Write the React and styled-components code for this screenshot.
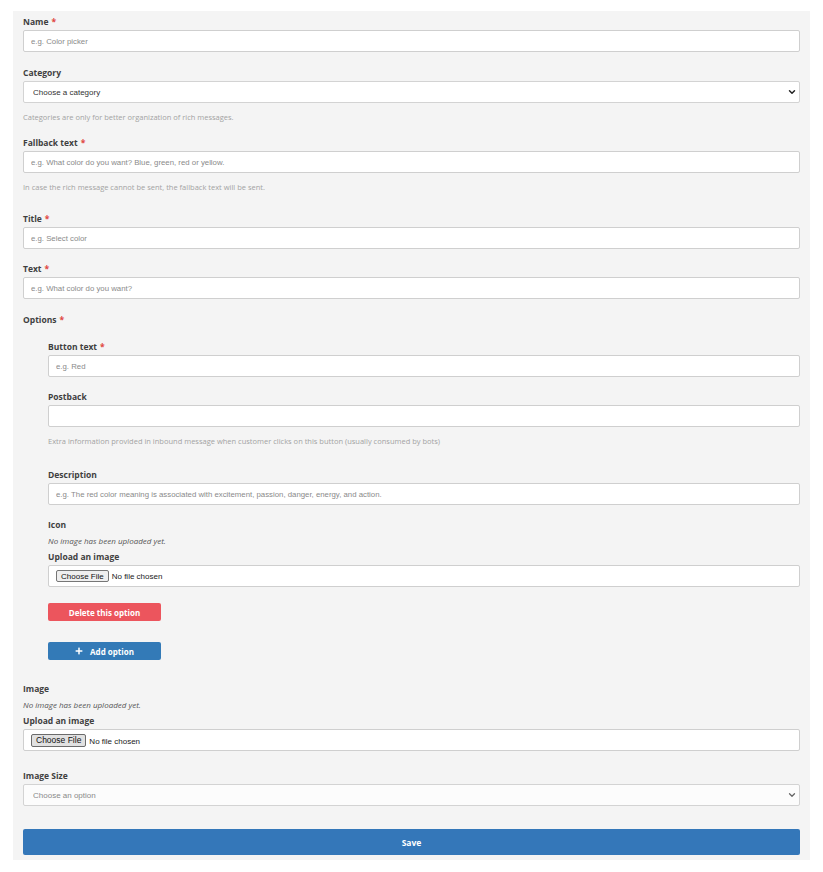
import React from 'react';
import styled, { createGlobalStyle } from 'styled-components';
import { ChevronDown } from 'lucide-react';
import { FaPlus } from 'react-icons/fa';

const GlobalStyle = createGlobalStyle`
  html, body {
    margin: 0;
    padding: 0;
    background: #fff;
  }
  * {
    box-sizing: border-box;
  }
`;

export default function App() {
  return (
    <Page>
      <GlobalStyle />
      <Panel>
        <FormGroup $mb={15}>
          <Label required>Name</Label>
          <TextInput placeholder="e.g. Color picker" />
        </FormGroup>

        <FormGroup $mb={14}>
          <Label>Category</Label>
          <SelectBox>
            <Select defaultValue="">
              <option value="">Choose a category</option>
            </Select>
            <Chevron size={10} strokeWidth={3.5} />
          </SelectBox>
          <HelpText>Categories are only for better organization of rich messages.</HelpText>
        </FormGroup>

        <FormGroup $mb={20}>
          <Label required>Fallback text</Label>
          <TextInput placeholder="e.g. What color do you want? Blue, green, red or yellow." />
          <HelpText>In case the rich message cannot be sent, the fallback text will be sent.</HelpText>
        </FormGroup>

        <FormGroup $mb={14}>
          <Label required>Title</Label>
          <TextInput placeholder="e.g. Select color" />
        </FormGroup>

        <FormGroup $mb={15}>
          <Label required>Text</Label>
          <TextInput placeholder="e.g. What color do you want?" />
        </FormGroup>

        <SectionTitle>
          Options<Star>*</Star>
        </SectionTitle>

        <OptionBlock>
          <FormGroup $mb={14}>
            <Label required>Button text</Label>
            <TextInput placeholder="e.g. Red" />
          </FormGroup>

          <FormGroup $mb={22}>
            <Label>Postback</Label>
            <TextInput />
            <HelpText>
              Extra information provided in inbound message when customer clicks on this button (usually consumed by bots)
            </HelpText>
          </FormGroup>

          <FormGroup $mb={14}>
            <Label>Description</Label>
            <TextInput placeholder="e.g. The red color meaning is associated with excitement, passion, danger, energy, and action." />
          </FormGroup>

          <FormGroup $mb={16}>
            <Label>Icon</Label>
            <EmptyNote>No image has been uploaded yet.</EmptyNote>
            <Label $spaced>Upload an image</Label>
            <FileBox>
              <FileInput type="file" />
            </FileBox>
          </FormGroup>

          <ActionButton $variant="danger" $mb={21}>Delete this option</ActionButton>

          <ActionButton $variant="primary" $mb={23}>
            <FaPlus size={8} />
            Add option
          </ActionButton>
        </OptionBlock>

        <FormGroup $mb={19}>
          <Label>Image</Label>
          <EmptyNote>No image has been uploaded yet.</EmptyNote>
          <Label $spaced>Upload an image</Label>
          <FileBox>
            <FileInput type="file" $classic />
          </FileBox>
        </FormGroup>

        <FormGroup $mb={23}>
          <Label>Image Size</Label>
          <SelectBox>
            <Select defaultValue="" $muted>
              <option value="">Choose an option</option>
            </Select>
            <Chevron size={10} strokeWidth={3} $muted />
          </SelectBox>
        </FormGroup>

        <SaveButton>Save</SaveButton>
      </Panel>
    </Page>
  );
}

function Label({ required, children, $spaced }) {
  return (
    <LabelText $spaced={$spaced}>
      {children}
      {required && <Star>*</Star>}
    </LabelText>
  );
}

const Page = styled.div`
  padding: 11px 13px 12px;
  font-family: 'Open Sans', 'Liberation Sans', sans-serif;
`;

const Panel = styled.form`
  background: #f4f4f4;
  padding: 5px 10px 5px;
`;

const FormGroup = styled.div`
  display: flex;
  flex-direction: column;
  margin-bottom: ${({ $mb }) => $mb}px;
`;

const LabelText = styled.label`
  display: block;
  font-size: 8.5px;
  font-weight: 700;
  line-height: 12px;
  color: #3f3f3f;
  margin-top: ${({ $spaced }) => ($spaced ? 4 : 0)}px;
  margin-bottom: 2px;
`;

const SectionTitle = styled(LabelText)`
  margin-bottom: 15px;
`;

const Star = styled.span`
  color: #e0463f;
  margin-left: 3px;
`;

const TextInput = styled.input`
  display: block;
  width: 100%;
  height: 22px;
  padding: 0 7px;
  border: 1px solid #cfcfcf;
  border-radius: 2px;
  background: #fff;
  font-family: 'Liberation Sans', Arial, sans-serif;
  font-size: 7.8px;
  color: #333;
  outline: none;

  &::placeholder {
    color: #8a8a8a;
  }
`;

const SelectBox = styled.div`
  position: relative;
`;

const Select = styled.select`
  display: block;
  width: 100%;
  height: 22px;
  padding: 0 9px;
  border: 1px solid #d3d3d3;
  border-radius: 2px;
  background: ${({ $muted }) => ($muted ? '#fcfcfc' : '#fff')};
  appearance: none;
  font-family: 'Liberation Sans', Arial, sans-serif;
  font-size: 8px;
  color: ${({ $muted }) => ($muted ? '#8a8a8a' : '#333')};
  outline: none;
`;

const Chevron = styled(ChevronDown)`
  position: absolute;
  right: 3px;
  top: 6px;
  color: ${({ $muted }) => ($muted ? '#666' : '#222')};
  pointer-events: none;
`;

const HelpText = styled.p`
  margin: 8px 0 0;
  font-size: 7.5px;
  line-height: 12px;
  color: #a3a3a3;
`;

const OptionBlock = styled.div`
  padding-left: 25px;
`;

const EmptyNote = styled.p`
  margin: 2px 0 0;
  font-size: 8px;
  line-height: 12px;
  font-style: italic;
  color: #555;
`;

const FileBox = styled.div`
  display: flex;
  align-items: center;
  height: 22px;
  padding: 0 7px;
  border: 1px solid #cfcfcf;
  border-radius: 2px;
  background: #fff;
`;

const FileInput = styled.input`
  font-family: 'Liberation Sans', Arial, sans-serif;
  font-size: 8px;
  color: #222;

  &::file-selector-button {
    font-family: 'Liberation Sans', Arial, sans-serif;
    font-size: ${({ $classic }) => ($classic ? 8.5 : 8)}px;
    height: ${({ $classic }) => ($classic ? 13 : 12)}px;
    padding: 0 4px;
    margin-right: 3px;
    border: 1px solid ${({ $classic }) => ($classic ? '#6b6b6b' : '#767676')};
    border-radius: 2px;
    background: ${({ $classic }) => ($classic ? '#e1e1e1' : '#efefef')};
    color: #111;
  }
`;

const ActionButton = styled.button`
  display: flex;
  align-items: center;
  justify-content: center;
  gap: 7px;
  width: 113px;
  height: 18px;
  margin-bottom: ${({ $mb }) => $mb}px;
  padding: 0;
  border: 0;
  border-radius: 2px;
  background: ${({ $variant }) => ($variant === 'danger' ? '#ec555d' : '#337ab7')};
  color: #fff;
  font-family: 'Open Sans', sans-serif;
  font-size: 8px;
  font-weight: 700;
`;

const SaveButton = styled.button`
  display: block;
  width: 100%;
  height: 26px;
  padding: 0;
  border: 0;
  border-radius: 2px;
  background: #3477b9;
  color: #fff;
  font-family: 'Open Sans', sans-serif;
  font-size: 8.5px;
  font-weight: 700;
`;
